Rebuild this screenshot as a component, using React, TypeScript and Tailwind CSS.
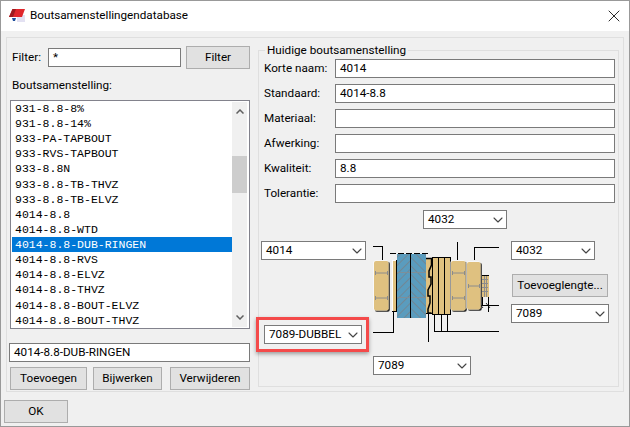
import { ChevronDown, X } from "lucide-react";

const listItems = [
  "931-8.8-8%",
  "931-8.8-14%",
  "933-PA-TAPBOUT",
  "933-RVS-TAPBOUT",
  "933-8.8N",
  "933-8.8-TB-THVZ",
  "933-8.8-TB-ELVZ",
  "4014-8.8",
  "4014-8.8-WTD",
  "4014-8.8-DUB-RINGEN",
  "4014-8.8-RVS",
  "4014-8.8-ELVZ",
  "4014-8.8-THVZ",
  "4014-8.8-BOUT-ELVZ",
  "4014-8.8-BOUT-THVZ",
];

const fields = [
  { label: "Korte naam:", value: "4014" },
  { label: "Standaard:", value: "4014-8.8" },
  { label: "Materiaal:", value: "" },
  { label: "Afwerking:", value: "" },
  { label: "Kwaliteit:", value: "8.8" },
  { label: "Tolerantie:", value: "" },
];

const btnClass =
  "flex h-[23px] items-center justify-center border border-[#adadad] bg-[#e1e1e1] text-black";
const inputClass =
  "flex h-[19px] items-center border border-[#7a7a7a] bg-white pl-[4px] text-black";

function Combo({ text, className }: { text: string; className: string }) {
  return (
    <div
      className={`absolute flex h-[19px] items-center justify-between whitespace-nowrap border border-[#7a7a7a] bg-white pl-[4px] text-black ${className}`}
    >
      <span>{text}</span>
      <ChevronDown size={16} strokeWidth={1.6} className="text-[#444]" />
    </div>
  );
}

function Nut({ x, y, w, h, lines }: { x: number; y: number; w: number; h: number; lines: number[] }) {
  return (
    <g>
      <rect x={x + 0.8} y={y + 0.8} width={w} height={h} rx="2" fill="#222" />
      <rect x={x - 0.6} y={y - 0.6} width={w} height={h} rx="2" fill="#fff" />
      <rect x={x} y={y} width={w - 0.4} height={h - 0.4} rx="2" fill="#dfc180" />
      {lines.map((ly) => (
        <g key={ly} stroke="#8c8c8c" strokeWidth="1" fill="none">
          <line x1={x + 2} x2={x + w - 2} y1={ly} y2={ly} />
          <line x1={x + 1.5} x2={x + 1.5} y1={ly - 2} y2={ly + 2} />
          <line x1={x + w - 1.5} x2={x + w - 1.5} y1={ly - 2} y2={ly + 2} />
        </g>
      ))}
    </g>
  );
}

function BoltDrawing() {
  return (
    <svg viewBox="360 235 150 110" width={150} height={110} className="absolute left-[101px] top-[32px]">
      <defs>
        <pattern id="hatchA" width="6" height="6" patternUnits="userSpaceOnUse" patternTransform="rotate(45)">
          <rect width="6" height="6" fill="#5a9cbe" />
          <line x1="0" x2="0" y1="0" y2="6" stroke="#75838c" strokeWidth="1.6" />
        </pattern>
        <pattern id="hatchB" width="6" height="6" patternUnits="userSpaceOnUse" patternTransform="rotate(-45)">
          <rect width="6" height="6" fill="#5a9cbe" />
          <line x1="0" x2="0" y1="0" y2="6" stroke="#75838c" strokeWidth="1.6" />
        </pattern>
      </defs>

      {/* leaders */}
      <g stroke="#000" strokeWidth="1" fill="none" shapeRendering="crispEdges">
        <path d="M373 246.5H382.5V260" />
        <path d="M457.5 242V260" />
        <path d="M499 247.5H474.5V260" />
        <path d="M393.5 312V332.5H373" />
        <path d="M428.5 314V342" />
        <path d="M434.5 315V331.5H499M441.5 315V331.5M447.5 315V331.5" />
        <path d="M390 253.5H430" strokeDasharray="6 2" />
        <path d="M478 305.5H499" />
        <path d="M488.5 297V312" />
        <path d="M482.5 297V305" />
      </g>
      <path d="M479 303L483 308M486 303L490 308" stroke="#000" strokeWidth="0.8" fill="none" />

      {/* plates */}
      <rect x="397" y="254" width="14" height="64" fill="url(#hatchA)" />
      <rect x="411" y="254" width="15" height="64" fill="url(#hatchB)" />
      <rect x="397" y="272" width="29" height="1" fill="#7d8f9a" />
      <rect x="397" y="297" width="29" height="1" fill="#7d8f9a" />
      <rect x="410" y="254" width="1" height="64" fill="#000" />

      <Nut x={374} y={261} w={15} h={50} lines={[273, 298]} />

      {/* washer */}
      <rect x="392" y="260" width="5" height="52" fill="#000" />
      <rect x="392" y="260" width="4" height="51" fill="#fff" />
      <rect x="393" y="261" width="3" height="50" fill="#dfc180" />

      {/* lock washer */}
      <rect x="426" y="258" width="6" height="55" fill="#dfc180" />
      <path
        d="M426 258.5H431.5V265L429 271V277L431 277V284L428 290V296L430 296V303L428 309V313H431.5"
        stroke="#000"
        strokeWidth="1.5"
        fill="none"
      />
      <path d="M426 313.5H432" stroke="#000" fill="none" />

      {/* spring washers */}
      <g shapeRendering="crispEdges">
        <rect x="432.5" y="257.5" width="17.5" height="57" fill="#dfc180" stroke="#000" />
        <rect x="438" y="257" width="1" height="58" fill="#000" />
        <rect x="444" y="257" width="1" height="58" fill="#000" />
      </g>

      <Nut x={451} y={261} w={15} h={50} lines={[273, 298]} />
      <Nut x={467} y={262} w={14} h={48} lines={[286]} />

      {/* bolt end */}
      <g shapeRendering="crispEdges">
        <rect x="482" y="275" width="6.5" height="22" fill="#dfc180" />
        <g stroke="#8c8c8c" strokeWidth="1">
          <path d="M484 275V297M486 275V297" />
          <path d="M482 279H488M482 283H488M482 287H488M482 291H488" />
        </g>
        <path d="M482 275H488.5" stroke="#000" fill="none" />
      </g>
    </svg>
  );
}

export default function App() {
  return (
    <div
      className="flex h-[427px] w-[630px] flex-col border border-[#999] bg-[#f0f0f0] text-[11.7px] text-black"
      style={{ fontFamily: 'Roboto, sans-serif' }}
    >
      <div className="flex h-[30px] shrink-0 items-center justify-between bg-white pl-[8px] pr-[5px]">
        <div className="flex items-center gap-[5px]">
          <svg viewBox="0 0 16 13" width={16} height={13}>
            <rect x="8" y="6" width="8" height="7" fill="#e3e1f2" />
            <path d="M3.5 0H16L13 8H0Z" fill="#e0262c" />
            <path d="M3.5 0H7L4 8H0Z" fill="#9d1a1e" />
            <path d="M3 9H7L6 12H4Z" fill="#1f4e9c" />
          </svg>
          <span>Boutsamenstellingendatabase</span>
        </div>
        <X size={20} strokeWidth={1} className="text-black" />
      </div>

      <div className="ml-[5px] mt-[6px] flex h-[355px] w-[618px] border border-[#dfdfdf]">
        {/* left column */}
        <div className="flex w-[244px] flex-col pl-[2px] pt-[8px]">
          <div className="flex h-[23px] items-center pl-[3px]">
            <span className="w-[36px]">Filter:</span>
            <div className={`${inputClass} w-[133px]`}>*</div>
            <div className={`${btnClass} ml-[5px] w-[64px]`}>Filter</div>
          </div>
          <div className="flex h-[31px] items-start pl-[3px] pt-[8px] leading-[16px]">Boutsamenstelling:</div>
          <div className="ml-[1px] flex h-[229px] w-[240px] border border-[#82828c] bg-white pl-px">
            <div
              className="w-[220px] overflow-hidden text-[11.5px]"
              style={{ fontFamily: '"Liberation Mono", monospace' }}
            >
              {listItems.map((item) => (
                <div
                  key={item}
                  className={`flex h-[15.14px] items-center pl-[3px] ${
                    item === "4014-8.8-DUB-RINGEN" ? "bg-[#0078d7] text-white" : "text-black"
                  }`}
                >
                  {item}
                </div>
              ))}
            </div>
            <div className="mb-px mt-px flex w-[15px] flex-col items-center bg-[#f0f0f0]">
              <svg viewBox="0 0 8 5" width={8} height={5} className="mt-[7px]" fill="none" stroke="#606060" strokeWidth="1.5">
                <path d="M0.5 4.5L4 1L7.5 4.5" />
              </svg>
              <div className="mt-[42px] h-[37px] w-full bg-[#cdcdcd]" />
              <svg viewBox="0 0 8 5" width={8} height={5} className="mt-[122px]" fill="none" stroke="#606060" strokeWidth="1.5">
                <path d="M0.5 0.5L4 4L7.5 0.5" />
              </svg>
            </div>
          </div>
          <div className={`${inputClass} mt-[14px] w-[241px]`}>4014-8.8-DUB-RINGEN</div>
          <div className="mt-[5px] flex pl-px">
            <div className={`${btnClass} w-[77px]`}>Toevoegen</div>
            <div className={`${btnClass} ml-[6px] w-[69px]`}>Bijwerken</div>
            <div className={`${btnClass} ml-[8px] w-[80px]`}>Verwijderen</div>
          </div>
        </div>

        {/* right group */}
        <div className="relative ml-[7px] mt-[12px] flex h-[337px] w-[361px] flex-col border border-[#dfdfdf] pt-[8px]">
          <span className="absolute left-[6px] top-[-9px] bg-[#f0f0f0] px-[2px] leading-[16px]">
            Huidige boutsamenstelling
          </span>
          <div className="flex flex-col gap-[6px] pl-[5px]">
            {fields.map((f) => (
              <div key={f.label} className="flex items-center">
                <span className="w-[71px]">{f.label}</span>
                <div className={`${inputClass} w-[280px]`}>{f.value}</div>
              </div>
            ))}
          </div>
          <div className="relative flex-1">
            <BoltDrawing />
            <Combo text="4032" className="left-[164px] top-[7px] w-[84px]" />
            <Combo text="4014" className="left-[2px] top-[38px] w-[105px]" />
            <Combo text="4032" className="left-[252px] top-[38px] w-[84px]" />
            <div className={`${btnClass} absolute left-[253px] top-[71px] w-[96px]`}>Toevoeglengte...</div>
            <Combo text="7089" className="left-[252px] top-[101px] w-[98px]" />
            <div className="absolute left-[-3px] top-[114px] h-[35px] w-[113px] border-[3px] border-[#f44a4a] shadow-[0_2px_4px_rgba(0,0,0,0.35)]" />
            <Combo text="7089-DUBBEL" className="left-[5px] top-[122px] w-[98px]" />
            <Combo text="7089" className="left-[114px] top-[153px] w-[98px]" />
          </div>
        </div>
      </div>

      <div className={`${btnClass} ml-[3px] mt-[8px] w-[64px]`}>OK</div>
    </div>
  );
}
